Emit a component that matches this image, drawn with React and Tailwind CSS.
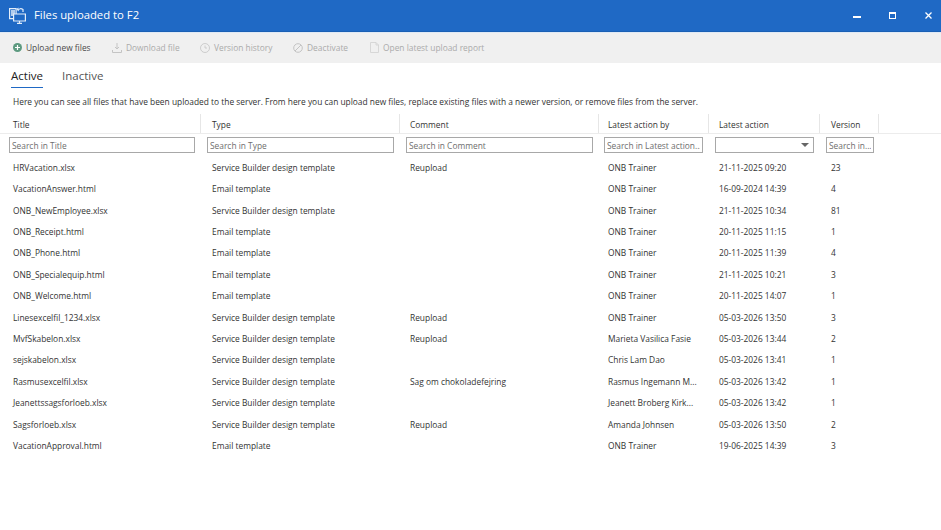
import React from 'react';

const rows = [
  ['HRVacation.xlsx', 'Service Builder design template', 'Reupload', 'ONB Trainer', '21-11-2025 09:20', '23'],
  ['VacationAnswer.html', 'Email template', '', 'ONB Trainer', '16-09-2024 14:39', '4'],
  ['ONB_NewEmployee.xlsx', 'Service Builder design template', '', 'ONB Trainer', '21-11-2025 10:34', '81'],
  ['ONB_Receipt.html', 'Email template', '', 'ONB Trainer', '20-11-2025 11:15', '1'],
  ['ONB_Phone.html', 'Email template', '', 'ONB Trainer', '20-11-2025 11:39', '4'],
  ['ONB_Specialequip.html', 'Email template', '', 'ONB Trainer', '21-11-2025 10:21', '3'],
  ['ONB_Welcome.html', 'Email template', '', 'ONB Trainer', '20-11-2025 14:07', '1'],
  ['Linesexcelfil_1234.xlsx', 'Service Builder design template', 'Reupload', 'ONB Trainer', '05-03-2026 13:50', '3'],
  ['MvfSkabelon.xlsx', 'Service Builder design template', 'Reupload', 'Marieta Vasilica Fasie', '05-03-2026 13:44', '2'],
  ['sejskabelon.xlsx', 'Service Builder design template', '', 'Chris Lam Dao', '05-03-2026 13:41', '1'],
  ['Rasmusexcelfil.xlsx', 'Service Builder design template', 'Sag om chokoladefejring', 'Rasmus Ingemann M...', '05-03-2026 13:42', '1'],
  ['Jeanettssagsforloeb.xlsx', 'Service Builder design template', '', 'Jeanett Broberg Kirk...', '05-03-2026 13:42', '1'],
  ['Sagsforloeb.xlsx', 'Service Builder design template', 'Reupload', 'Amanda Johnsen', '05-03-2026 13:50', '2'],
  ['VacationApproval.html', 'Email template', '', 'ONB Trainer', '19-06-2025 14:39', '3'],
];

const headers = ['Title', 'Type', 'Comment', 'Latest action by', 'Latest action', 'Version'];
const filters = ['Search in Title', 'Search in Type', 'Search in Comment', 'Search in Latest action...', null, 'Search in...'];
const gridCols = 'grid grid-cols-[201px_199px_199px_110px_111px_59px_1fr]';
const cellPad = ['pl-[13px]', 'pl-[11px]', 'pl-[10px]', 'pl-[9px]', 'pl-[10px]', 'pl-[11px]'];
const filterPad = ['pl-[9px] pr-[6px]', 'pl-[6px] pr-[6px]', 'pl-[6px] pr-[6px]', 'pl-[5px] pr-[6px]', 'pl-[6px] pr-[6px]', 'pl-[6px] pr-[5px]'];

function AppIcon() {
  return (
    <svg width="17" height="17" viewBox="0 0 17 17" fill="none" stroke="#e4eefa" strokeWidth="1.200">
      <path d="M.6 1.600h6.500v10H.6z" />
      <path d="M2 4h4M2 6h4M2 8h3" strokeWidth="1.400" />
      <path d="M4.600 7h11.800v7H4.600z" fill="#1f69c5" />
      <path d="M10.500 14v2M8 16.400h5" />
      <path d="M9 3.500C10 1.500 12 1.200 14 2.500V5" />
      <path d="M7.500 2L9.500 .5v4z" fill="#e4eefa" stroke="none" />
    </svg>
  );
}

function ToolButton({ icon, label, active = false, className = '' }) {
  return (
    <div className={`flex items-center gap-[4px] ${active ? 'text-[#4a4a4a]' : 'text-[#ababab]'} ${className}`}>
      {icon}
      <span>{label}</span>
    </div>
  );
}

export default function App() {
  return (
    <div className="h-[530px] w-[941px] overflow-hidden bg-white font-['Open_Sans',sans-serif] text-[8.4px] text-[#333333]">
      <header className="flex h-[32px] items-center border-b border-[#1a5fb4] bg-[#1f69c5] pl-[9px] text-white">
        <AppIcon />
        <span className="ml-[8px] text-[11.3px]">Files uploaded to F2</span>
        <div className="ml-auto flex items-center gap-[28px] pr-[9px]">
          <span className="mt-[3px] h-[2px] w-[8px] bg-white" />
          <span className="h-[7px] w-[7px] border border-white border-t-2" />
          <svg width="7" height="7" viewBox="0 0 7 7" stroke="white" strokeWidth="1.300" className="ml-[1px]">
            <path d="M.5.5l6 6M6.500.5l-6 6" />
          </svg>
        </div>
      </header>

      <div className="flex h-[31px] items-center border-t border-[#dfe9f5] bg-[#f0f0f0] pl-[13px]">
        <ToolButton
          active
          label="Upload new files"
          className="w-[99px]"
          icon={
            <svg width="9" height="9" viewBox="0 0 9 9">
              <circle cx="4.500" cy="4.500" r="4.500" fill="#5d9a80" />
              <path d="M4.500 2v5M2 4.500h5" stroke="white" strokeWidth="1.200" />
            </svg>
          }
        />
        <ToolButton
          label="Download file"
          className="w-[88px]"
          icon={
            <svg width="10" height="10" viewBox="0 0 10 10" fill="none" stroke="#c4c4c4">
              <path d="M5 0v6M3 4l2 2 2-2M.5 7v2.500h9V7" />
            </svg>
          }
        />
        <ToolButton
          label="Version history"
          className="w-[93px]"
          icon={
            <svg width="10" height="10" viewBox="0 0 10 10" fill="none" stroke="#c4c4c4" strokeWidth=".8">
              <circle cx="5" cy="5" r="4.500" />
              <path d="M5 2.500V5h2" />
            </svg>
          }
        />
        <ToolButton
          label="Deactivate"
          className="w-[77px]"
          icon={
            <svg width="10" height="10" viewBox="0 0 10 10" fill="none" stroke="#c4c4c4">
              <circle cx="5" cy="5" r="4.300" />
              <path d="M2 8l6-6" />
            </svg>
          }
        />
        <ToolButton
          label="Open latest upload report"
          icon={
            <svg width="9" height="11" viewBox="0 0 9 11" fill="none" stroke="#d0d0d0" strokeWidth=".8">
              <path d="M.5.5h5.500l2.500 2.500v7.500h-8zM6 .5V3h2.500" />
            </svg>
          }
        />
      </div>

      <nav className="flex gap-[19px] pl-[11px] pt-[4px] text-[11.5px]">
        <div className="h-[21px] border-b border-[#1f69c5] text-[#222222]">Active</div>
        <div className="text-[#555555]">Inactive</div>
      </nav>

      <p className="pl-[13px] pt-[7px] leading-[14px]">
        Here you can see all files that have been uploaded to the server. From here you can upload new files, replace existing files with a newer version, or remove files from the server.
      </p>

      <div className={`${gridCols} mt-[5px] h-[20px] border-b border-[#ececec]`}>
        {headers.map((header, index) => (
          <div key={header} className={`flex items-center border-r border-[#e6e6e6] pt-[4px] ${cellPad[index]}`}>
            {header}
          </div>
        ))}
      </div>

      <div className={`${gridCols} h-[22px] items-center`}>
        {filters.map((placeholder, index) => (
          <div key={index} className={filterPad[index]}>
            {placeholder ? (
              <input
                readOnly
                placeholder={placeholder}
                className="h-[16px] w-full border border-[#a8a8a8] bg-white px-[2px] text-[8.4px] outline-none placeholder:text-[#6e6e6e]"
              />
            ) : (
              <div className="flex h-[16px] items-center justify-end border border-[#a8a8a8] pr-[4px]">
                <span className="h-0 w-0 border-x-[4px] border-t-[4px] border-x-transparent border-t-[#666666]" />
              </div>
            )}
          </div>
        ))}
      </div>

      <div className="pt-[1.5px]">
        {rows.map((row) => (
          <div key={row[0]} className={`${gridCols} h-[21.4px] items-center`}>
            {row.map((cell, index) => (
              <div key={index} className={`truncate ${cellPad[index]}`}>
                {cell}
              </div>
            ))}
          </div>
        ))}
      </div>
    </div>
  );
}
